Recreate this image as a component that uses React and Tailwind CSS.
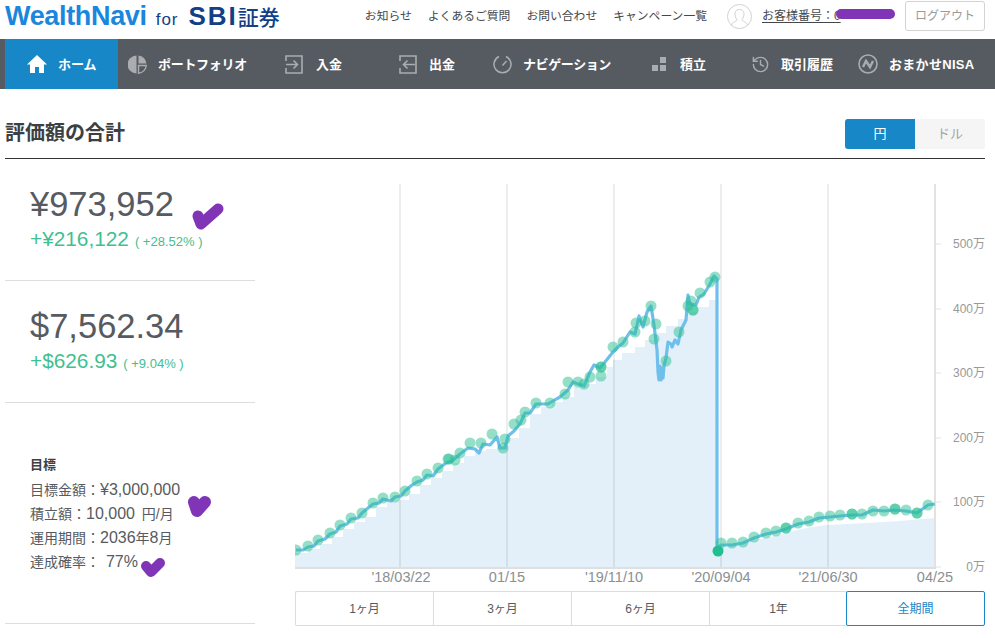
import React from 'react';
import { History } from 'lucide-react';

const font = { fontFamily: '"Liberation Sans", "Noto Sans CJK JP", sans-serif' };

const dots = [
  [296, 550], [308, 546], [318, 540], [330, 533], [340, 525], [351, 518], [362, 513], [373, 503], [383, 498],
  [395, 497], [405, 491], [417, 481], [427, 474], [438, 468], [448, 459], [449, 459], [455, 460], [460, 453], [470, 443],
  [481, 443], [492, 434], [503, 448], [505, 439], [514, 424], [521, 420], [525, 412], [536, 403], [550, 403],
  [565, 394], [568, 382], [578, 382], [584, 384], [590, 377], [601, 367], [601, 367], [601, 376], [613, 347], [623, 342],
  [635, 332], [636, 323], [645, 321], [651, 306], [656, 324], [654, 339], [666, 361], [679, 332], [688, 306],
  [691, 301], [693, 310], [693, 310], [700, 293], [710, 282], [715, 277],
  [721, 543], [732, 543], [743, 542], [754, 537], [766, 533], [776, 531], [786, 528], [786, 528], [798, 523], [809, 521],
  [819, 517], [830, 516], [840, 515], [852, 514], [852, 514], [862, 514], [873, 511], [884, 511], [895, 509], [895, 509], [906, 510],
  [917, 513], [917, 513], [928, 505],
];

const line = [
  [296, 550], [303, 550], [308, 547], [314, 546], [318, 541], [325, 539], [330, 534], [336, 532], [340, 526],
  [347, 524], [351, 519], [358, 518], [362, 513], [368, 508], [373, 504], [379, 503], [383, 499], [391, 501],
  [395, 497], [401, 496], [405, 491], [412, 485], [417, 482], [423, 480], [427, 475], [433, 476], [438, 469],
  [446, 463], [452, 461], [460, 454], [468, 448], [475, 449], [479, 453], [483, 444], [490, 445], [497, 437],
  [500, 448], [505, 448], [508, 436], [514, 431], [520, 424], [525, 413], [530, 413], [536, 404], [548, 404],
  [553, 401], [560, 397], [568, 390], [573, 382], [578, 384], [584, 386], [590, 372], [594, 365], [600, 368],
  [605, 362], [613, 352], [618, 347], [623, 343], [630, 332], [635, 334], [639, 316], [643, 327], [647, 312],
  [651, 306], [654, 325], [657, 350], [658, 372], [659, 380], [660, 366], [661, 380], [662, 368], [663, 378], [664, 366], [666, 358],
  [668, 342], [671, 344], [672, 347], [675, 340], [678, 344], [681, 330], [686, 320], [688, 295], [690, 304],
  [696, 305], [699, 297], [704, 294], [710, 284], [714, 276], [717, 279], [717, 548], [721, 545], [732, 545],
  [743, 543], [754, 538], [766, 534], [776, 532], [786, 529], [798, 524], [809, 522], [819, 518], [830, 517],
  [840, 516], [852, 515], [862, 515], [873, 510], [884, 511], [895, 510], [906, 511], [917, 513], [928, 505], [935, 504],
];

const stairs = [
  [295, 553], [308, 549], [320, 544], [332, 537], [343, 529], [354, 522], [365, 517], [376, 507], [387, 502],
  [398, 500], [409, 494], [420, 485], [431, 478], [442, 471], [453, 463], [464, 456], [475, 451], [486, 449],
  [497, 445], [508, 438], [519, 428], [530, 414], [541, 407], [552, 402], [563, 397], [574, 387], [585, 384],
  [596, 377], [607, 367], [613, 360], [622, 353], [635, 347], [645, 340], [657, 333], [666, 326], [678, 319],
  [688, 312], [698, 307], [709, 300],
];

const tail = [
  [717, 549], [740, 545], [760, 539], [780, 535], [797, 530], [812, 527], [827, 525], [867, 523], [900, 521], [935, 518],
];

function areaPath() {
  let d = 'M295,568 ';
  stairs.forEach(([x, y], i) => {
    if (i > 0) d += `H${x} `;
    else d += `L${x},${y} `;
    d += `V${y} `;
  });
  d += 'H717 V549 ';
  tail.forEach(([x, y]) => {
    d += `L${x},${y} `;
  });
  return d + 'V568 Z';
}

const yLabels = [
  ['500万', 244], ['400万', 309], ['300万', 373], ['200万', 438], ['100万', 502], ['0万', 567],
];
const xLabels = [
  ["'18/03/22", 401], ['01/15', 507], ["'19/11/10", 614], ["'20/09/04", 721], ["'21/06/30", 828], ['04/25', 935],
];

function Chart() {
  return (
    <svg className="block w-[690px] h-[415px]" viewBox="295 170 690 415">
      <path d={areaPath()} fill="#e4f0f9" />
      {[400, 507, 614, 721, 828].map((x) => (
        <line key={x} x1={x} x2={x} y1="184" y2="568" stroke="#000" strokeOpacity="0.07" strokeWidth="2" />
      ))}
      <line x1="935" x2="935" y1="184" y2="568" stroke="#e2e2e2" strokeWidth="2" />
      <line x1="295" x2="936" y1="568" y2="568" stroke="#dfdfdf" strokeWidth="2" />
      {yLabels.map(([label, y]) => (
        <g key={label}>
          <line x1="936" x2="941" y1={y} y2={y} stroke="#e2e2e2" />
          <text x="985" y={y + 4} textAnchor="end" fontSize="12" fill="#999">{label}</text>
        </g>
      ))}
      {xLabels.map(([label, x]) => (
        <text key={label} x={x} y="582" textAnchor="middle" fontSize="14.5" fill="#8b8f93">{label}</text>
      ))}
      <polyline
        points={line.map((p) => p.join(',')).join(' ')}
        fill="none"
        stroke="#6fbfec"
        strokeWidth="3.2"
        strokeLinejoin="round"
      />
      {dots.map(([x, y], i) => (
        <circle key={i} cx={x} cy={y} r="5.5" fill="#2cbf94" fillOpacity="0.5" />
      ))}
      <circle cx="718" cy="551" r="5.5" fill="#22bd90" />
    </svg>
  );
}

const iconColor = '#a9adb1';

function HomeIcon() {
  return (
    <svg width="20" height="20" viewBox="0 0 20 20">
      <path d="M10 1 L20 10.5 H17 V19 H12 V13 H8 V19 H3 V10.5 H0 Z" fill="#fff" />
    </svg>
  );
}

function PieIcon() {
  return (
    <svg width="19" height="19" viewBox="0 0 19 19">
      <path d="M8.5 0.5 V18.5 A9 9 0 0 1 8.5 0.5 Z" fill={iconColor} />
      <path d="M10.5 0.5 A9 9 0 0 1 18.5 8.5 H10.5 Z" fill={iconColor} />
      <path d="M10.5 10.5 H18.3 A9 9 0 0 1 10.5 18.3 Z" fill="none" stroke={iconColor} strokeWidth="1.4" />
    </svg>
  );
}

function InIcon() {
  return (
    <svg width="18" height="19" viewBox="0 0 18 19" fill="none" stroke={iconColor} strokeWidth="1.6">
      <path d="M1 6 V1 H17 V18 H1 V13" />
      <path d="M1 9.5 H12 M8.5 5.5 L12.5 9.5 L8.5 13.5" />
    </svg>
  );
}

function OutIcon() {
  return (
    <svg width="18" height="19" viewBox="0 0 18 19" fill="none" stroke={iconColor} strokeWidth="1.6">
      <path d="M1 6 V1 H17 V18 H1 V13" />
      <path d="M16 9.5 H5 M8.5 5.5 L4.5 9.5 L8.5 13.5" />
    </svg>
  );
}

function NaviIcon() {
  return (
    <svg width="19" height="19" viewBox="0 0 19 19" fill="none" stroke={iconColor} strokeWidth="1.5">
      <path d="M6 1.5 A8.5 8.5 0 1 0 13 1.5" />
      <path d="M9.5 10.5 L13.5 6" />
    </svg>
  );
}

function BlocksIcon() {
  return (
    <svg width="14" height="14" viewBox="0 0 14 14" fill={iconColor}>
      <rect x="8" y="0" width="6" height="6" />
      <rect x="0" y="8" width="6" height="6" />
      <rect x="8" y="8" width="6" height="6" />
    </svg>
  );
}

function NisaIcon() {
  return (
    <svg width="20" height="20" viewBox="0 0 20 20" fill="none" stroke={iconColor}>
      <circle cx="10" cy="10" r="9" strokeWidth="1.6" />
      <path d="M5 13 L8 7 L12 13 L15 7" strokeWidth="2.4" />
    </svg>
  );
}

const navItems = [
  { label: 'ホーム', icon: <HomeIcon />, cell: 'w-[113px] pl-[22px] gap-[11px] bg-[#1787c7]' },
  { label: 'ポートフォリオ', icon: <PieIcon />, cell: 'w-[157px] pl-[10px] gap-[11px] tracking-[-0.3px]' },
  { label: '入金', icon: <InIcon />, cell: 'w-[114px] pl-[10px] gap-[13px]' },
  { label: '出金', icon: <OutIcon />, cell: 'w-[94px] pl-[10px] gap-[12px]' },
  { label: 'ナビゲーション', icon: <NaviIcon />, cell: 'w-[159px] pl-[10px] gap-[11px] tracking-[-0.4px]' },
  { label: '積立', icon: <BlocksIcon />, cell: 'w-[99px] pl-[10px] gap-[14px]' },
  { label: '取引履歴', icon: <History size={19} color={iconColor} strokeWidth={1.8} />, cell: 'w-[107px] pl-[10px] gap-[11px]' },
  { label: 'おまかせNISA', icon: <NisaIcon />, cell: 'w-[137px] pl-[10px] gap-[11px] tracking-[0.3px]' },
];

const topLinks = ['お知らせ', 'よくあるご質問', 'お問い合わせ', 'キャンペーン一覧'];

function Header() {
  return (
    <header className="h-[39px] flex items-start pl-[5px] pr-[10px]">
      <div className="flex items-baseline h-[26px] -mt-[3px] whitespace-nowrap">
        <span className="text-[27px] leading-[26px] font-bold tracking-[-0.34px] text-[#1a86dc]">WealthNavi</span>
        <span className="ml-[9px] text-[17px] font-medium tracking-[1px] text-[#123f86]">for</span>
        <span className="ml-[10px] text-[26px] font-bold tracking-[2px] text-[#123f86]">SBI</span>
        <span className="text-[21px] font-medium text-[#123f86]">証券</span>
      </div>
      <nav className="ml-auto flex items-center gap-4 h-[32px] pt-[1px] text-[11.8px] text-[#44484d]">
        {topLinks.map((t) => (
          <a key={t}>{t}</a>
        ))}
      </nav>
      <svg className="ml-[20px] mt-[4px]" width="25" height="25" viewBox="0 0 26 26" fill="none" stroke="#cfcfcf">
        <circle cx="13" cy="13" r="12.5" />
        <path d="M4.5 22 C6 18 10 18.5 10.5 16.5 C8.5 14 8 11 8.5 9 C9.5 4.5 16.5 4.5 17.5 9 C18 11 17.5 14 15.5 16.5 C16 18.5 20 18 21.5 22" />
      </svg>
      <div className="ml-[10px] w-[127px] h-[32px] flex items-center">
        <span className="text-xs text-[#44484d] underline underline-offset-2 w-full">お客様番号：0</span>
      </div>
      <button className="ml-[16px] mt-[1px] w-[80px] h-[30px] border border-[#d3d3d3] rounded-[3px] text-xs text-[#9a9a9a]">
        ログアウト
      </button>
    </header>
  );
}

function NavBar() {
  return (
    <div className="h-[50px] pl-[5px] flex bg-[#565b61]">
      {navItems.map((it) => (
        <a key={it.label} className={`flex items-center pt-[2px] text-[13px] font-bold text-white whitespace-nowrap ${it.cell}`}>
          <span className="shrink-0 -mt-[2px]">{it.icon}</span>
          <span>{it.label}</span>
        </a>
      ))}
    </div>
  );
}

function Balance({ main, diff, rate }) {
  return (
    <div className="h-[122px] pt-[25px] pl-[25px] border-b border-[#dedede]">
      <div className="text-[34.5px] leading-[40px] text-[#565b61]">{main}</div>
      <div className="-mt-[1px] text-[#3fc08f] whitespace-nowrap">
        <span className="text-[20.8px]">{diff}</span>
        <span className="ml-[6px] text-[13px]">( {rate} )</span>
      </div>
    </div>
  );
}

function Goal() {
  return (
    <div className="h-[221px] pl-[25px] pt-[53px] border-b border-[#dedede] text-[#565b61]">
      <div className="text-[13px] font-bold leading-[18px] text-[#3c3f43]">目標</div>
      <div className="text-[14px] leading-[24px] mt-[4px] whitespace-nowrap">
        <div>目標金額：<span className="text-[16px]">¥3,000,000</span></div>
        <div>積立額：<span className="text-[16px]">10,000</span><span className="ml-[3px]"> 円/月</span></div>
        <div>運用期間：<span className="text-[16px]">2036</span>年<span className="text-[16px]">8</span>月</div>
        <div>達成確率： <span className="ml-[2px] text-[16px]">77%</span></div>
      </div>
    </div>
  );
}

const ranges = ['1ヶ月', '3ヶ月', '6ヶ月', '1年'];

function RangeTabs() {
  return (
    <div className="mt-[6px] h-[35px] flex text-xs text-[#565b61]">
      <div className="w-[552px] flex border border-r-0 border-[#dcdcdc] rounded-l-[2px]">
        {ranges.map((r) => (
          <button key={r} className="flex-1 border-r border-[#dcdcdc] last:border-r-0">{r}</button>
        ))}
      </div>
      <button className="w-[139px] -ml-[1px] border border-[#1787c7] rounded-[2px] text-[#1787c7]">全期間</button>
    </div>
  );
}

function Marks() {
  return (
    <svg className="absolute inset-0 pointer-events-none" width="995" height="638" fill="none" stroke="#7f35b5" strokeLinecap="round" strokeLinejoin="round">
      <path d="M841 14 H890" strokeWidth="10" />
      <path d="M198 216 L201 224 L218 209" strokeWidth="11" />
      <path d="M194 502 L197 511 L205 502" strokeWidth="12" />
      <path d="M146 566 L151 572 L160 563" strokeWidth="10" />
    </svg>
  );
}

export default function App() {
  return (
    <div className="relative w-[995px] h-[638px] overflow-hidden bg-white" style={font}>
      <Header />
      <NavBar />
      <main className="pl-[5px] pr-[10px]">
        <div className="mt-[30px] h-[40px] flex items-start justify-between border-b border-[#333]">
          <h1 className="text-[20px] leading-[28px] font-bold text-[#3c3f43]">評価額の合計</h1>
          <div className="flex w-[140px] h-[30px] text-[13px]">
            <span className="w-[70px] flex items-center justify-center bg-[#1787c7] text-white rounded-l-[3px]">円</span>
            <span className="w-[70px] flex items-center justify-center bg-[#f5f5f5] text-[#a5a5a5] rounded-r-[3px]">ドル</span>
          </div>
        </div>
        <div className="flex">
          <div className="w-[250px] shrink-0">
            <Balance main="¥973,952" diff="+¥216,122" rate="+28.52%" />
            <Balance main="$7,562.34" diff="+$626.93" rate="+9.04%" />
            <Goal />
          </div>
          <div className="ml-[40px] w-[690px] pt-[11px]">
            <Chart />
            <RangeTabs />
          </div>
        </div>
      </main>
      <Marks />
    </div>
  );
}
